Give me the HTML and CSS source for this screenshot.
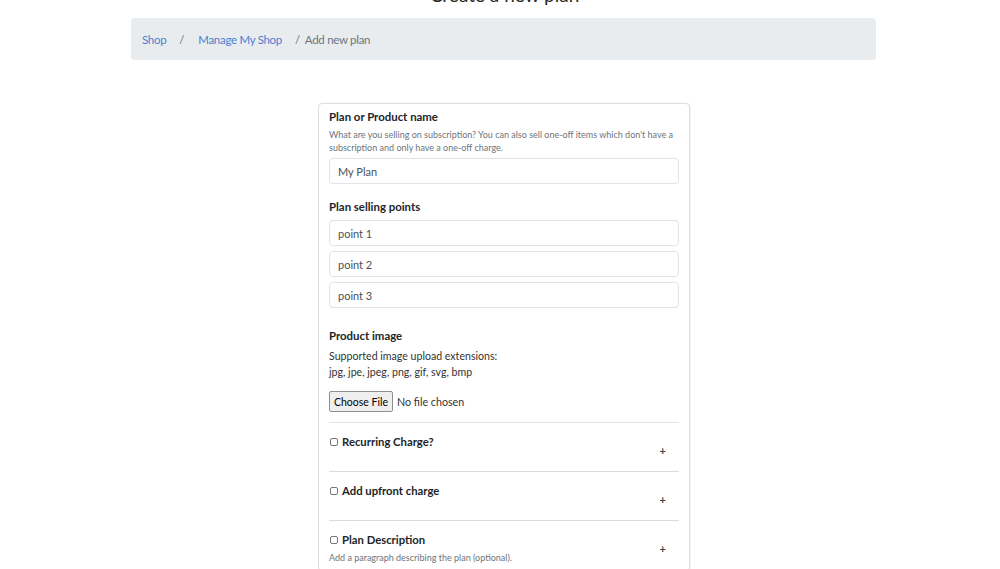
FILE: index.html
```html
<!DOCTYPE html>
<html>
<head>
<meta charset="utf-8">
<link rel="stylesheet" href="styles.css">
</head>
<body>
<div class="page">
  <h1 class="title">Create a new plan</h1>
  <nav class="crumbs">
    <a class="crumb-link" href="#">Shop</a>
    <span class="sep">/</span>
    <a class="crumb-link" href="#">Manage My Shop</a>
    <span class="sep sep-tight">/</span>
    <span class="crumb-current">Add new plan</span>
  </nav>
  <div class="card">
    <div class="group">
      <div class="label">Plan or Product name</div>
      <div class="help">What are you selling on subscription? You can also sell one-off items which don't have a subscription and only have a one-off charge.</div>
      <input class="field" type="text" value="My Plan">
    </div>
    <div class="group">
      <div class="label label-points">Plan selling points</div>
      <div class="points">
        <input class="field" type="text" placeholder="point 1">
        <input class="field" type="text" placeholder="point 2">
        <input class="field" type="text" placeholder="point 3">
      </div>
    </div>
    <div class="group-image">
      <div class="label">Product image</div>
      <p class="exts">Supported image upload extensions:<br>jpg, jpe, jpeg, png, gif, svg, bmp</p>
      <div class="file-row"><span class="file-btn">Choose File</span><span class="file-none">No file chosen</span></div>
    </div>
    <div class="section">
      <div class="sec-head"><span class="box"></span><span class="sec-title">Recurring Charge?</span></div>
      <span class="plus">+</span>
    </div>
    <div class="section">
      <div class="sec-head"><span class="box"></span><span class="sec-title">Add upfront charge</span></div>
      <span class="plus">+</span>
    </div>
    <div class="section">
      <div class="sec-head"><span class="box"></span><span class="sec-title">Plan Description</span></div>
      <div class="sec-help">Add a paragraph describing the plan (optional).</div>
      <span class="plus">+</span>
    </div>
  </div>
</div>
</body>
</html>
```
FILE: styles.css
```css
html, body { margin: 0; padding: 0; background: #fff; }
body { font-family: Lato, "Liberation Sans", sans-serif; color: #212529; }
.page { width: 745px; margin-left: 131px; }
.title {
  font-family: Lato, "Open Sans", sans-serif;
  font-weight: 400; font-size: 19px; line-height: 24px;
  text-align: center; color: #2a2a2a;
  margin: -17px 0 0 0; height: 35px;
  padding-left: 2px;
}
.crumbs {
  display: flex; align-items: center;
  background: #e9ecef; border-radius: 4px;
  height: 42px; padding: 0 11px; box-sizing: border-box;
  font-family: Lato, "Open Sans", sans-serif; font-size: 11.5px; letter-spacing: -0.3px;
}
.crumb-link { color: #4a80d0; text-decoration: none; }
.sep { color: #6c757d; margin: 0 14px 0 13px; }
.sep-tight { margin: 0 5px 0 13px; }
.crumb-current { color: #6c757d; }
.card {
  width: 372px; box-sizing: border-box; margin: 43px 0 0 187px;
  border: 1px solid #dcdcdc; border-radius: 4px;
  box-shadow: 1px 0 1px rgba(0,0,0,0.06);
  padding: 6px 10px 0 10px;
}
.group { margin-bottom: 16px; }
.label { font-weight: 700; font-size: 11.4px; line-height: 14px; color: #212529; }
.label-points { margin-bottom: 6px; }
.help { font-size: 9px; line-height: 13px; color: #6c757d; margin: 4px 0 4px; }
.field {
  display: block; width: 100%; box-sizing: border-box; height: 26px;
  border: 1px solid #e0e3e6; border-radius: 4px; padding: 0 8px;
  font-family: Lato, sans-serif; font-size: 11px; color: #495057;
  background: #fff; outline: none;
}
.field::placeholder { color: #495057; opacity: 1; }
.points { display: flex; flex-direction: column; gap: 5px; }
.group-image { margin-top: 21px; }
.exts { margin: 5px 0 0; font-size: 10.6px; line-height: 16px; color: #333; }
.file-row { display: flex; align-items: center; margin-top: 11px; padding-bottom: 10px; border-bottom: 1px solid #e3e3e3; }
.file-btn {
  display: inline-flex; align-items: center; height: 21px; box-sizing: border-box;
  padding: 0 4px; border: 1px solid #8f8f8f; border-radius: 2px; background: #efefef;
  font-size: 10.5px; color: #000;
}
.file-none { font-size: 10.7px; color: #333; margin-left: 4px; }
.section {
  position: relative; height: 49px; box-sizing: border-box;
  border-bottom: 1px solid #dcdcdc; padding-top: 12px;
}
.section:last-child { border-bottom: none; }
.sec-head { display: flex; align-items: flex-start; }
.box { width: 6px; height: 6px; border: 1px solid #777; border-radius: 2px; margin: 3px 4px 0 1px; flex: none; }
.sec-title { font-weight: 700; font-size: 11.3px; line-height: 14px; color: #212529; }
.sec-help { font-size: 9px; line-height: 13px; color: #6c757d; margin-top: 4px; }
.plus { position: absolute; right: 13px; top: 21px; font-size: 11px; line-height: 14px; font-weight: 700; color: #444; }
```
